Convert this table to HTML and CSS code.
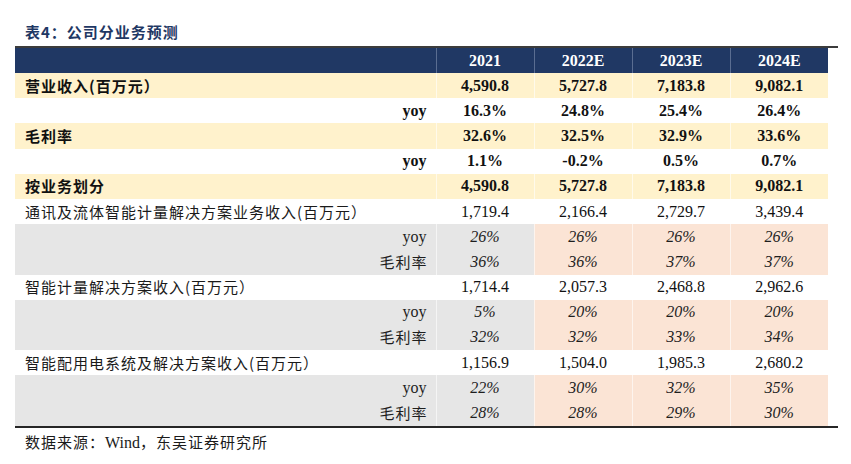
FILE: index.html
```html
<!DOCTYPE html>
<html lang="zh-CN">
<head>
<meta charset="utf-8">
<title>表4：公司分业务预测</title>
<link rel="stylesheet" href="styles.css">
</head>
<body>
<div class="sheet">
  <div class="title">表4：公司分业务预测</div>
  <div class="frame">
    <table class="grid">
      <colgroup>
        <col class="c-label"><col class="c-num"><col class="c-num"><col class="c-num"><col class="c-num">
      </colgroup>
      <thead>
        <tr class="head">
          <th></th><th>2021</th><th>2022E</th><th>2023E</th><th>2024E</th>
        </tr>
      </thead>
      <tbody>
        <tr class="main">
          <td class="lbl">营业收入(百万元）</td><td>4,590.8</td><td>5,727.8</td><td>7,183.8</td><td>9,082.1</td>
        </tr>
        <tr class="sub-bold">
          <td class="lbl-r">yoy</td><td>16.3%</td><td>24.8%</td><td>25.4%</td><td>26.4%</td>
        </tr>
        <tr class="main">
          <td class="lbl">毛利率</td><td>32.6%</td><td>32.5%</td><td>32.9%</td><td>33.6%</td>
        </tr>
        <tr class="sub-bold">
          <td class="lbl-r">yoy</td><td>1.1%</td><td>-0.2%</td><td>0.5%</td><td>0.7%</td>
        </tr>
        <tr class="main">
          <td class="lbl">按业务划分</td><td>4,590.8</td><td>5,727.8</td><td>7,183.8</td><td>9,082.1</td>
        </tr>
        <tr class="seg">
          <td class="lbl">通讯及流体智能计量解决方案业务收入(百万元）</td><td>1,719.4</td><td>2,166.4</td><td>2,729.7</td><td>3,439.4</td>
        </tr>
        <tr class="ratio">
          <td class="lbl-r">yoy</td><td class="base">26%</td><td>26%</td><td>26%</td><td>26%</td>
        </tr>
        <tr class="ratio">
          <td class="lbl-r cjk">毛利率</td><td class="base">36%</td><td>36%</td><td>37%</td><td>37%</td>
        </tr>
        <tr class="seg">
          <td class="lbl">智能计量解决方案收入(百万元）</td><td>1,714.4</td><td>2,057.3</td><td>2,468.8</td><td>2,962.6</td>
        </tr>
        <tr class="ratio">
          <td class="lbl-r">yoy</td><td class="base">5%</td><td>20%</td><td>20%</td><td>20%</td>
        </tr>
        <tr class="ratio">
          <td class="lbl-r cjk">毛利率</td><td class="base">32%</td><td>32%</td><td>33%</td><td>34%</td>
        </tr>
        <tr class="seg">
          <td class="lbl">智能配用电系统及解决方案收入(百万元）</td><td>1,156.9</td><td>1,504.0</td><td>1,985.3</td><td>2,680.2</td>
        </tr>
        <tr class="ratio">
          <td class="lbl-r">yoy</td><td class="base">22%</td><td>30%</td><td>32%</td><td>35%</td>
        </tr>
        <tr class="ratio">
          <td class="lbl-r cjk">毛利率</td><td class="base">28%</td><td>28%</td><td>29%</td><td>30%</td>
        </tr>
      </tbody>
    </table>
  </div>
  <div class="source">数据来源：<span class="latin">Wind</span>，东吴证券研究所</div>
</div>
</body>
</html>
```

FILE: styles.css
```css
html, body {
  margin: 0;
  padding: 0;
  background: #ffffff;
}

body {
  font-family: "Liberation Serif", "Noto Sans CJK SC", serif;
  color: #111111;
}

.sheet {
  width: 823px;
  margin-left: 15px;
}

.title {
  padding: 22px 0 4px 10px;
  height: 20px;
  line-height: 20px;
  font-family: "Noto Sans CJK SC", sans-serif;
  font-size: 15px;
  font-weight: 700;
  letter-spacing: 1px;
  color: #1f3864;
}

.frame {
  border-top: 2px solid #3c3c3c;
  border-bottom: 2px solid #262626;
}

.grid {
  width: 813px;
  border-collapse: collapse;
  table-layout: fixed;
}

.c-label { width: 421px; }
.c-num { width: 98px; }

.grid th,
.grid td {
  padding: 0;
  text-align: center;
  vertical-align: middle;
  white-space: nowrap;
  font-size: 16px;
  line-height: 20px;
}

.grid td + td,
.grid th + th {
  border-left: 1px solid rgba(255, 255, 255, 0.6);
}

.head th {
  height: 25px;
  background: #203864;
  color: #ffffff;
  font-weight: 700;
}

.head th + th {
  border-left: 1px solid rgba(200, 210, 230, 0.35);
}

.grid tbody td {
  height: 25.2px;
}

.main td {
  background: #fff2cc;
  font-weight: 700;
}

.sub-bold td {
  background: #ffffff;
  font-weight: 700;
}

.seg td {
  background: #ffffff;
}

.ratio td {
  background: #fbe4d5;
  font-style: italic;
  color: #1e1e1e;
}

.ratio td.base,
.ratio td.lbl-r {
  background: #e6e6e6;
}

.lbl {
  text-align: left !important;
  padding-left: 10px !important;
  font-family: "Noto Sans CJK SC", sans-serif;
  font-size: 15px !important;
  letter-spacing: 1px;
}

.seg .lbl {
  font-weight: 400;
  color: #1a1a1a;
}

.lbl-r {
  text-align: right !important;
  padding-right: 9px !important;
  font-style: normal !important;
}

.lbl-r.cjk {
  font-family: "Noto Sans CJK SC", sans-serif;
  font-size: 15px !important;
  letter-spacing: 1px;
  padding-right: 8px !important;
}

.source {
  margin-top: 4px;
  padding-left: 10px;
  line-height: 20px;
  font-family: "Noto Sans CJK SC", sans-serif;
  font-size: 15px;
  letter-spacing: 1px;
  color: #1a1a1a;
}

.source .latin {
  font-family: "Liberation Serif", serif;
  font-size: 16px;
  letter-spacing: 0;
}
```
